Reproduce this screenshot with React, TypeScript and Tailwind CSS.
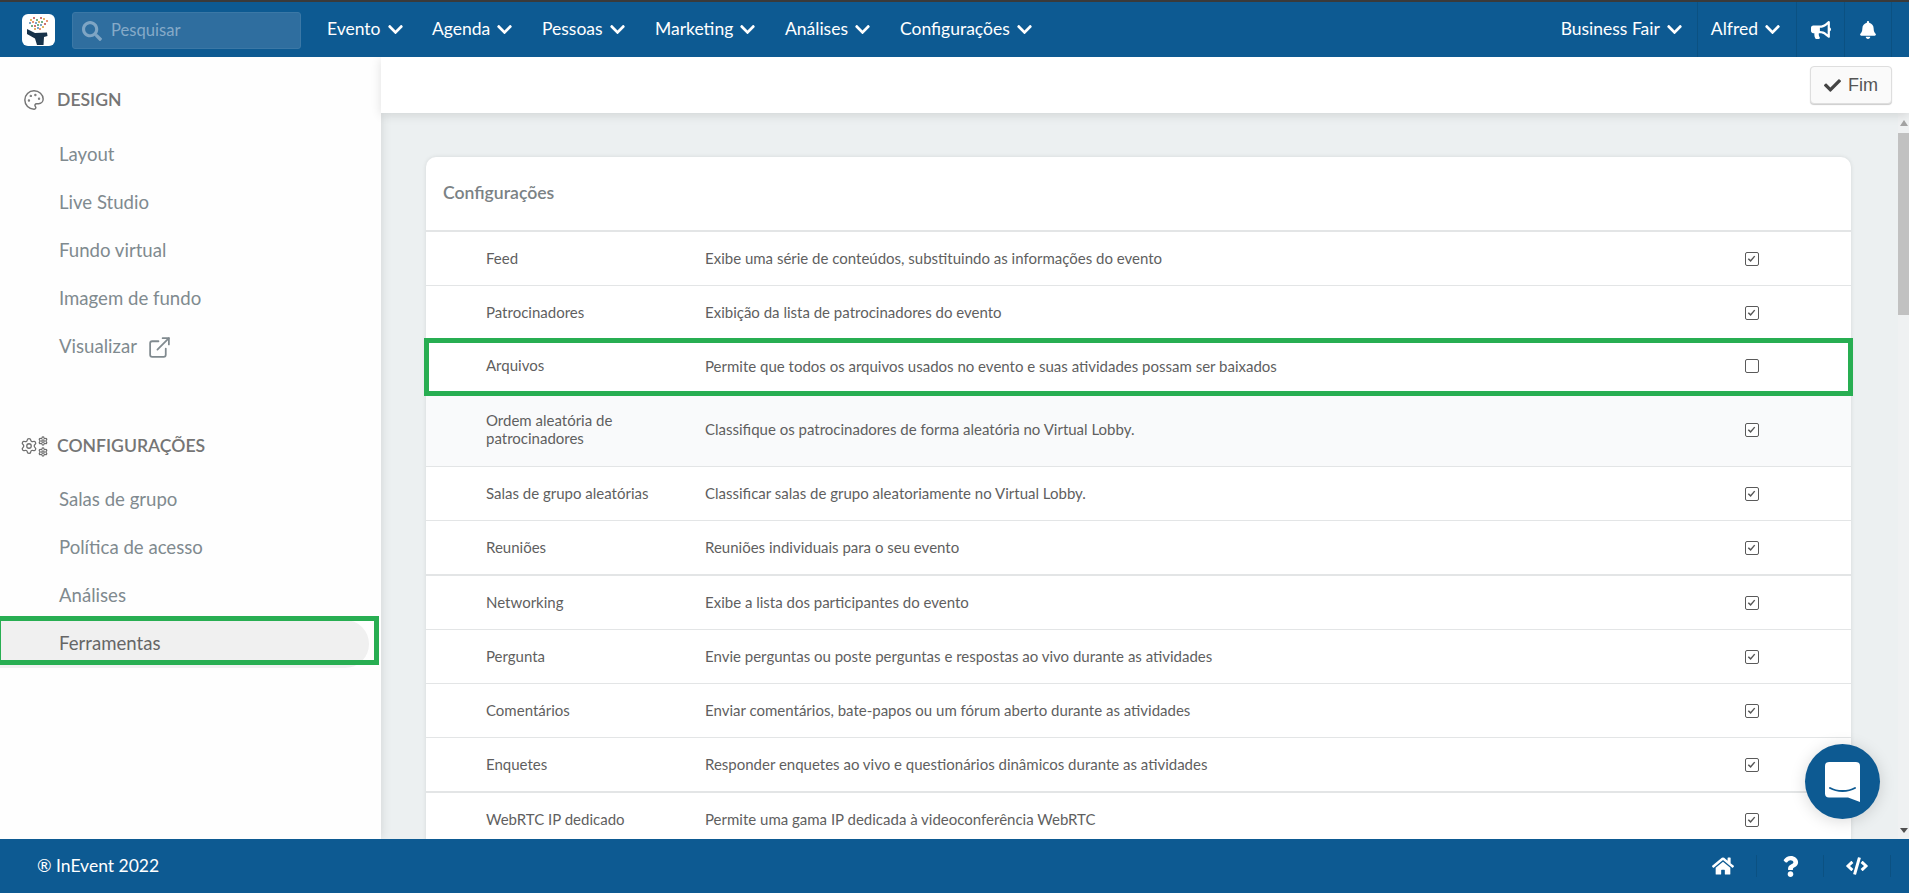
import { FaBell, FaBullhorn, FaCheck, FaChevronDown, FaCode, FaHome, FaQuestion, FaSearch } from 'react-icons/fa';
import { ExternalLink, Palette, Settings } from 'lucide-react';

const navItems = [
  { label: 'Evento', width: 'w-[105px]' },
  { label: 'Agenda', width: 'w-[110px]' },
  { label: 'Pessoas', width: 'w-[113px]' },
  { label: 'Marketing', width: 'w-[130px]' },
  { label: 'Análises', width: 'w-[115px]' },
  { label: 'Configurações', width: 'w-auto' },
];

const designLinks = ['Layout', 'Live Studio', 'Fundo virtual', 'Imagem de fundo'];
const configLinks = ['Salas de grupo', 'Política de acesso', 'Análises'];

const rows = [
  { name: 'Feed', text: 'Exibe uma série de conteúdos, substituindo as informações do evento', on: true, h: 'h-[54px] border-b' },
  { name: 'Patrocinadores', text: 'Exibição da lista de patrocinadores do evento', on: true, h: 'h-[54px] border-b' },
  { name: 'Arquivos', text: 'Permite que todos os arquivos usados no evento e suas atividades possam ser baixados', on: false, h: 'h-[53px] border-b', marked: true },
  { name: 'Ordem aleatória de patrocinadores', text: 'Classifique os patrocinadores de forma aleatória no Virtual Lobby.', on: true, h: 'h-[74px] border-b bg-[#f9fafb]' },
  { name: 'Salas de grupo aleatórias', text: 'Classificar salas de grupo aleatoriamente no Virtual Lobby.', on: true, h: 'h-[54px] border-b' },
  { name: 'Reuniões', text: 'Reuniões individuais para o seu evento', on: true, h: 'h-[55px] border-b-2' },
  { name: 'Networking', text: 'Exibe a lista dos participantes do evento', on: true, h: 'h-[54px] border-b' },
  { name: 'Pergunta', text: 'Envie perguntas ou poste perguntas e respostas ao vivo durante as atividades', on: true, h: 'h-[54px] border-b' },
  { name: 'Comentários', text: 'Enviar comentários, bate-papos ou um fórum aberto durante as atividades', on: true, h: 'h-[54px] border-b' },
  { name: 'Enquetes', text: 'Responder enquetes ao vivo e questionários dinâmicos durante as atividades', on: true, h: 'h-[55px] border-b-2' },
  { name: 'WebRTC IP dedicado', text: 'Permite uma gama IP dedicada à videoconferência WebRTC', on: true, h: 'h-[54px] border-b' },
];

const logoDots = [
  [9, 6, '#d9a441'], [12, 4, '#c0504d'], [15, 6, '#4f9d69'], [19, 4, '#c0504d'], [22, 5, '#d9a441'], [25, 7, '#e07b53'],
  [8, 9, '#5b8fb9'], [11, 8, '#e07b53'], [14, 9, '#5b8fb9'], [17, 8, '#d9a441'], [20, 8, '#4f9d69'], [23, 10, '#c0504d'],
  [10, 12, '#4f9d69'], [13, 12, '#c0504d'], [16, 11, '#4f9d69'], [19, 11, '#5b8fb9'], [21, 13, '#d9a441'],
  [13, 15, '#d9a441'], [16, 14, '#5b8fb9'], [18, 15, '#e07b53'],
] as const;

function Logo() {
  return (
    <div className="w-[33px] h-[32px] mt-[1px] rounded-[6px] bg-white shrink-0 overflow-hidden">
      <svg viewBox="0 0 33 32" className="w-full h-full">
        {logoDots.map(([x, y, color]) => (
          <circle key={`${x}-${y}`} cx={x} cy={y} r="1.100" fill={color} />
        ))}
        <path d="M5 15l8 4 12-.5.500 3.500-3.500 1-.500 8H15l-2-6.500L5 20z" fill="#17324a" />
      </svg>
    </div>
  );
}

function Gears() {
  return (
    <div className="flex items-center text-[#6f6f6f]">
      <Settings size={18} strokeWidth={1.700} />
      <div className="flex flex-col gap-[1px]">
        <Settings size={10} strokeWidth={3} />
        <Settings size={10} strokeWidth={3} />
      </div>
    </div>
  );
}

function Checkbox({ on }: { on: boolean }) {
  return (
    <span className="w-[14px] h-[14px] border-[1.5px] border-[#5a5a5a] rounded-[2px] bg-white flex items-center justify-center">
      {on && (
        <svg viewBox="0 0 12 12" className="w-[11px] h-[11px]">
          <path d="M2.500 6.200 5 8.600 9.500 3.400" fill="none" stroke="#555" strokeWidth="1.600" />
        </svg>
      )}
    </span>
  );
}

export default function App() {
  return (
    <div className="h-[893px] w-[1909px] overflow-hidden flex flex-col bg-white font-['Lato','Noto_Sans',sans-serif]">
      {/* Top bar */}
      <header className="h-[57px] shrink-0 bg-[#0d5a92] border-t-2 border-[#3a3a3a] flex items-center text-white text-[17.5px] relative z-20">
        <div className="pl-[22px] pr-[17px]">
          <Logo />
        </div>
        <div className="w-[229px] h-[37px] mt-[2px] rounded-[3px] bg-[#2f6e9f] border border-[#3b78a6] flex items-center pl-[9px] gap-[9px] text-[#86aac8] text-[16.6px]">
          <FaSearch className="text-[20px] text-[#7fa5c4]" />
          <span>Pesquisar</span>
        </div>
        <nav className="flex items-center pl-[26px]">
          {navItems.map((item) => (
            <div key={item.label} className={`${item.width} flex items-center gap-[6px]`}>
              <span>{item.label}</span>
              <FaChevronDown className="text-[17px]" />
            </div>
          ))}
        </nav>
        <div className="ml-auto flex items-stretch h-full pr-[17px]">
          <div className="flex items-center gap-[6px] pr-[14px] border-r border-[#0b5182]">
            <span>Business Fair</span>
            <FaChevronDown className="text-[17px]" />
          </div>
          <div className="flex items-center gap-[6px] pl-[13px] pr-[15px] border-r border-[#0b5182]">
            <span>Alfred</span>
            <FaChevronDown className="text-[17px]" />
          </div>
          <div className="w-[48px] flex items-center justify-center border-r border-[#0b5182]">
            <FaBullhorn className="text-[20px]" />
          </div>
          <div className="w-[47px] flex items-center justify-center border-r border-[#0b5182]">
            <FaBell className="text-[18px]" />
          </div>
        </div>
      </header>

      <div className="flex flex-1 min-h-0">
        {/* Sidebar */}
        <aside className="w-[381px] shrink-0 bg-[#fefefe] shadow-[0_0_10px_rgba(0,0,0,0.12)] relative z-10 text-[#808a8f] text-[18.6px] pr-[12px]">
          <div className="flex items-center h-[24px] mt-[31px] pl-[23px] gap-[12px] text-[#757575] font-semibold text-[17.6px]">
            <Palette size={22} strokeWidth={1.600} />
            <span>DESIGN</span>
          </div>
          <ul className="mt-[19px]">
            {designLinks.map((link) => (
              <li key={link} className="h-[48px] flex items-center pl-[59px]">
                {link}
              </li>
            ))}
            <li className="h-[48px] flex items-center pl-[59px] gap-[10px]">
              Visualizar
              <ExternalLink size={25} strokeWidth={1.700} />
            </li>
          </ul>
          <div className="flex items-center h-[24px] mt-[63px] pl-[20px] gap-[9px] text-[#757575] font-semibold text-[17.6px]">
            <Gears />
            <span>CONFIGURAÇÕES</span>
          </div>
          <ul className="mt-[18px]">
            {configLinks.map((link) => (
              <li key={link} className="h-[48px] flex items-center pl-[59px]">
                {link}
              </li>
            ))}
            <li className="relative h-[48px] flex items-center pl-[59px] bg-[#f0f0f0] rounded-r-full text-[#666]">
              Ferramentas
              <span className="absolute left-[-4px] top-[-4px] w-[383px] h-[49px] border-[5px] border-[#28ae52]" />
            </li>
          </ul>
        </aside>

        {/* Main */}
        <main className="flex-1 min-w-0 bg-[#ecf0f1] flex flex-col relative">
          <div className="h-[56px] shrink-0 bg-white shadow-[0_2px_10px_rgba(0,0,0,0.12)] flex items-center justify-end pr-[17px] relative z-10">
            <button className="h-[38px] w-[82px] rounded-[4px] border border-[#dedede] bg-[#fafafa] shadow-[0_1px_1px_rgba(0,0,0,0.2)] flex items-center justify-center gap-[7px] text-[#555] text-[18px] font-['Liberation_Sans',sans-serif]">
              <FaCheck className="text-[17px] text-[#444]" />
              Fim
            </button>
          </div>
          <div className="flex-1 min-h-0 overflow-hidden pt-[44px] pl-[45px] pr-[58px]">
            <section className="bg-white rounded-t-[10px] shadow-[0_0_4px_rgba(0,0,0,0.1)] text-[#5f5f5f] text-[15px]">
              <div className="h-[75px] flex items-center pl-[17px] border-b-2 border-[#e3e5e6] text-[#7b8285] font-semibold text-[17.6px]">
                Configurações
              </div>
              {rows.map((row) => (
                <div
                  key={row.name}
                  className={`${row.marked ? 'relative z-10' : ''} ${row.h} flex items-center border-[#e3e5e6]`}
                >
                  <div className="w-[279px] pl-[60px] pr-[20px] pb-[2px] leading-[18px] shrink-0">{row.name}</div>
                  <div className="flex-1">{row.text}</div>
                  <div className="w-[180px] shrink-0 flex justify-center pr-[19px]">
                    <Checkbox on={row.on} />
                  </div>
                  {row.marked && (
                    <span className="absolute left-[-2px] right-[-2px] top-[-2px] bottom-[-4px] border-[5px] border-[#28ae52]" />
                  )}
                </div>
              ))}
            </section>
          </div>

          {/* Scrollbar */}
          <div className="absolute right-0 top-[56px] bottom-0 w-[11px] flex flex-col items-center bg-[#eff1f2]">
            <span className="mt-[7px] border-x-[4px] border-b-[6px] border-x-transparent border-b-[#a3a3a3]" />
            <span className="mt-[7px] w-full h-[182px] bg-[#c1c1c1]" />
            <span className="mt-auto mb-[6px] border-x-[4px] border-t-[5px] border-x-transparent border-t-[#505050]" />
          </div>

          {/* Chat launcher */}
          <div className="absolute right-[29px] bottom-[20px] w-[75px] h-[75px] rounded-full bg-[#0d5a92] shadow-[0_2px_16px_rgba(0,0,0,0.15)] flex items-center justify-center z-20">
            <svg viewBox="0 0 36 40" className="w-[36px] h-[40px]">
              <path d="M4 0h27a4 4 0 0 1 4 4v36l-12-4.500H4a4 4 0 0 1-4-4V4a4 4 0 0 1 4-4z" fill="#fff" />
              <path d="M5 26c7 4 18 4 25 0" fill="none" stroke="#0d5a92" strokeWidth="2" strokeLinecap="round" />
            </svg>
          </div>
        </main>
      </div>

      {/* Footer */}
      <footer className="h-[54px] shrink-0 bg-[#0d5a92] flex items-center text-white text-[17.5px] pl-[37px] relative z-20">
        <span>® InEvent 2022</span>
        <div className="ml-auto flex items-center h-[22px] pr-[18px]">
          <div className="w-[67px] h-full flex items-center justify-center border-r border-[#0b5182]">
            <FaHome className="text-[22px]" />
          </div>
          <div className="w-[67px] h-full flex items-center justify-center border-r border-[#0b5182]">
            <FaQuestion className="text-[21px]" />
          </div>
          <div className="w-[67px] h-full flex items-center justify-center border-r border-[#0b5182]">
            <FaCode className="text-[22px]" />
          </div>
        </div>
      </footer>
    </div>
  );
}
